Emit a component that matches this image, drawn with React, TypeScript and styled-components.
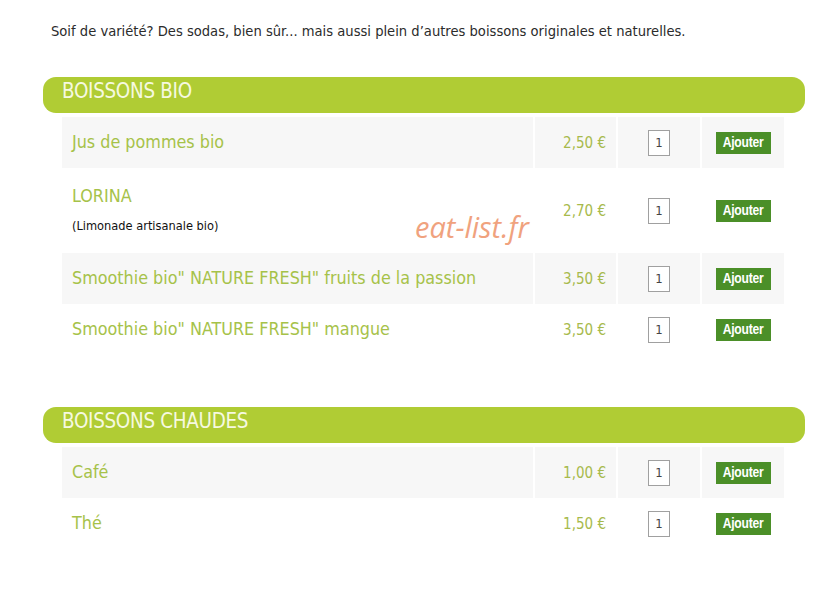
import React from "react";
import styled, { createGlobalStyle } from "styled-components";

const GlobalStyle = createGlobalStyle`
  html, body {
    margin: 0;
    padding: 0;
    background: #ffffff;
  }
  body {
    font-family: "DejaVu Sans Condensed", "DejaVu Sans", Tahoma, sans-serif;
  }
`;

type Item = {
  name: string;
  note?: string;
  price: string;
};

type Section = {
  title: string;
  items: Item[];
};

const sections: Section[] = [
  {
    title: "BOISSONS BIO",
    items: [
      { name: "Jus de pommes bio", price: "2,50 €" },
      { name: "LORINA", note: "(Limonade artisanale bio)", price: "2,70 €" },
      { name: "Smoothie bio\" NATURE FRESH\" fruits de la passion", price: "3,50 €" },
      { name: "Smoothie bio\" NATURE FRESH\" mangue", price: "3,50 €" },
    ],
  },
  {
    title: "BOISSONS CHAUDES",
    items: [
      { name: "Café", price: "1,00 €" },
      { name: "Thé", price: "1,50 €" },
    ],
  },
];

const Page = styled.div`
  position: relative;
  width: 826px;
  min-height: 601px;
  padding: 20px 0 0 43px;
  box-sizing: border-box;
`;

const Intro = styled.p`
  margin: 0 0 0 8px;
  font-size: 14.6px;
  line-height: 22px;
  color: #2b2b2b;
`;

const Block = styled.section<{ $first?: boolean }>`
  width: 762px;
  margin-top: ${(p) => (p.$first ? "35px" : "52px")};
`;

const Header = styled.h2`
  margin: 0;
  height: 36px;
  padding-left: 19px;
  border-radius: 13px;
  background: #b0cc34;
  color: #f6f9e0;
  font-size: 20.4px;
  font-weight: normal;
  line-height: 28px;
  letter-spacing: -0.3px;
`;

const Rows = styled.div`
  margin: 4px 0 0 19px;
  display: flex;
  flex-direction: column;
`;

const Row = styled.div<{ $shade: boolean; $tall?: boolean }>`
  display: grid;
  grid-template-columns: 471px 81px 82px 82px;
  column-gap: 2px;
  height: ${(p) => (p.$tall ? "85px" : "51px")};

  & > div {
    background: ${(p) => (p.$shade ? "#f7f7f7" : "#ffffff")};
  }
`;

const NameCell = styled.div`
  display: flex;
  flex-direction: column;
  justify-content: center;
  padding-left: 10px;
  gap: 12px;
`;

const Name = styled.span`
  font-size: 17.8px;
  color: #a6c249;
  line-height: 20px;
  margin-top: -2px;
`;

const Note = styled.span`
  font-size: 12.7px;
  color: #111111;
  line-height: 16px;
`;

const PriceCell = styled.div`
  display: flex;
  align-items: center;
  justify-content: flex-end;
  padding-right: 10px;
  font-size: 15px;
  color: #a7ba4c;
`;

const QtyCell = styled.div`
  display: flex;
  align-items: center;
  justify-content: center;
`;

const QtyInput = styled.input`
  width: 22px;
  height: 26px;
  box-sizing: border-box;
  border: 1px solid #a0a0a0;
  background: #ffffff;
  padding: 0;
  text-align: center;
  font-family: "DejaVu Sans Condensed", "DejaVu Sans", sans-serif;
  font-size: 13px;
  color: #444444;
  outline: none;
`;

const ButtonCell = styled.div`
  display: flex;
  align-items: center;
  justify-content: center;
`;

const AddButton = styled.button`
  display: flex;
  align-items: center;
  justify-content: center;
  width: 55px;
  height: 22px;
  border: none;
  padding: 0 0 1px;
  background: #4b8f28;
  color: #ffffff;
  cursor: pointer;
`;

const ButtonLabel = styled.span`
  display: inline-block;
  font-family: "Liberation Sans", Arial, sans-serif;
  font-weight: bold;
  font-size: 15.5px;
  letter-spacing: -0.3px;
  transform: scaleX(0.78);
  white-space: nowrap;
`;

const Watermark = styled.div`
  position: absolute;
  left: 415px;
  top: 207px;
  font-family: "Open Sans", "Noto Sans", sans-serif;
  font-style: italic;
  font-size: 29px;
  color: #f0a27e;
  pointer-events: none;
`;

export default function App() {
  return (
    <>
      <GlobalStyle />
      <Page>
        <Intro>
          Soif de variété? Des sodas, bien sûr... mais aussi plein d’autres boissons originales et naturelles.
        </Intro>
        {sections.map((section, si) => (
          <Block key={section.title} $first={si === 0}>
            <Header>{section.title}</Header>
            <Rows>
              {section.items.map((item, i) => (
                <Row key={item.name} $shade={i % 2 === 0} $tall={!!item.note}>
                  <NameCell>
                    <Name>{item.name}</Name>
                    {item.note && <Note>{item.note}</Note>}
                  </NameCell>
                  <PriceCell>{item.price}</PriceCell>
                  <QtyCell>
                    <QtyInput defaultValue="1" />
                  </QtyCell>
                  <ButtonCell>
                    <AddButton>
                      <ButtonLabel>Ajouter</ButtonLabel>
                    </AddButton>
                  </ButtonCell>
                </Row>
              ))}
            </Rows>
          </Block>
        ))}
        <Watermark>eat-list.fr</Watermark>
      </Page>
    </>
  );
}
